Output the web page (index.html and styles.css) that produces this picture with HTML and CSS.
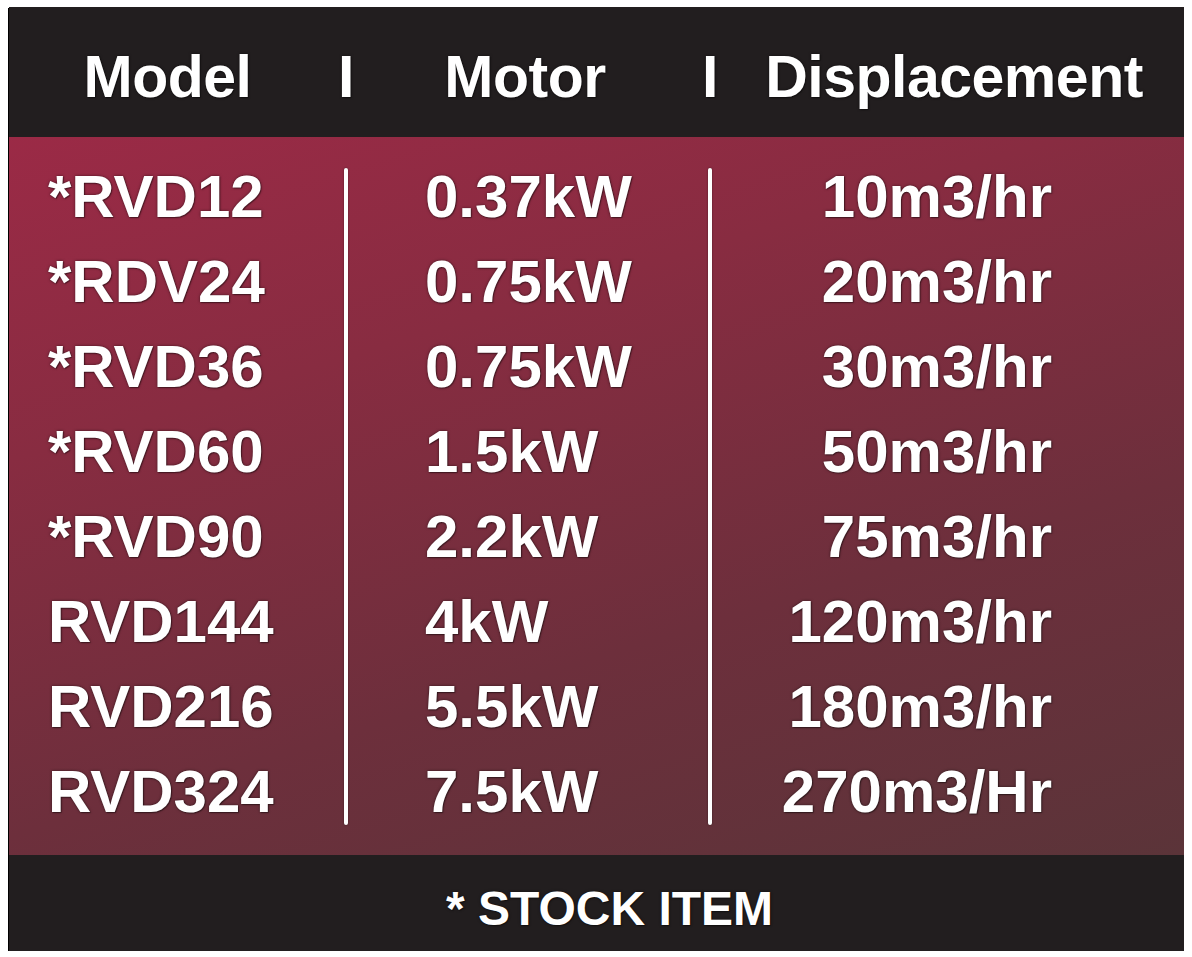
FILE: index.html
```html
<!DOCTYPE html>
<html lang="en">
<head>
<meta charset="utf-8">
<title>RVD Models</title>
<link rel="stylesheet" href="styles.css">
</head>
<body>
<div class="card">
  <div class="head">
    <div class="h-model">Model</div>
    <div class="h-sep"><span>I</span></div>
    <div class="h-motor">Motor</div>
    <div class="h-sep"><span>I</span></div>
    <div class="h-disp">Displacement</div>
  </div>
  <div class="body">
    <div class="col col-model">
      <div>*RVD12</div>
      <div>*RDV24</div>
      <div>*RVD36</div>
      <div>*RVD60</div>
      <div>*RVD90</div>
      <div>RVD144</div>
      <div>RVD216</div>
      <div>RVD324</div>
    </div>
    <div class="sep"></div>
    <div class="col col-motor">
      <div>0.37kW</div>
      <div>0.75kW</div>
      <div>0.75kW</div>
      <div>1.5kW</div>
      <div>2.2kW</div>
      <div>4kW</div>
      <div>5.5kW</div>
      <div>7.5kW</div>
    </div>
    <div class="sep"></div>
    <div class="col col-disp">
      <div>10m3/hr</div>
      <div>20m3/hr</div>
      <div>30m3/hr</div>
      <div>50m3/hr</div>
      <div>75m3/hr</div>
      <div>120m3/hr</div>
      <div>180m3/hr</div>
      <div>270m3/Hr</div>
    </div>
  </div>
  <div class="foot">* STOCK ITEM</div>
</div>
</body>
</html>
```

FILE: styles.css
```css
html, body {
  margin: 0;
  padding: 0;
  background: #ffffff;
}

body {
  font-family: "Liberation Sans", Arial, sans-serif;
  font-weight: bold;
  color: #ffffff;
}

.card {
  width: 1175px;
  margin: 7px 0 0 9px;
  background: #221e1f;
  box-shadow: -1px 1px 0 #000;
  text-shadow: 0 0 3px rgba(0, 0, 0, 0.55), 1px 1px 1px rgba(0, 0, 0, 0.35);
}

.head {
  display: flex;
  height: 130px;
  box-sizing: border-box;
  padding-top: 10px;
  font-size: 59px;
  line-height: 120px;
  letter-spacing: -0.5px;
}

.h-model {
  width: 335px;
  box-sizing: border-box;
  padding-right: 18px;
  text-align: center;
}

.h-motor {
  width: 360px;
  box-sizing: border-box;
  padding-right: 6px;
  text-align: center;
}

.h-disp {
  flex: 1;
  text-align: center;
  padding-left: 12px;
}

.h-sep {
  width: 4px;
  display: flex;
  justify-content: center;
}

.h-sep span {
  display: block;
}

.body {
  display: flex;
  height: 718px;
  box-sizing: border-box;
  padding: 17px 0 21px;
  background: linear-gradient(163deg, #9b2a46 0%, #882c41 30%, #6d2f3c 65%, #5b3439 100%);
}

.col {
  font-size: 60px;
  line-height: 85px;
}

.col-model {
  width: 335px;
  padding-left: 39px;
  box-sizing: border-box;
}

.col-motor {
  width: 360px;
  padding-left: 77px;
  box-sizing: border-box;
}

.col-disp {
  flex: 1;
  text-align: right;
  padding-right: 132px;
}

.sep {
  width: 4px;
  margin: 14px 0 9px;
  background: #ffffff;
  border-radius: 2px;
  box-shadow: 0 0 2px rgba(0, 0, 0, 0.5);
}

.foot {
  height: 96px;
  box-sizing: border-box;
  padding: 12px 0 0 26px;
  font-size: 48px;
  line-height: 83px;
  text-align: center;
}
```
